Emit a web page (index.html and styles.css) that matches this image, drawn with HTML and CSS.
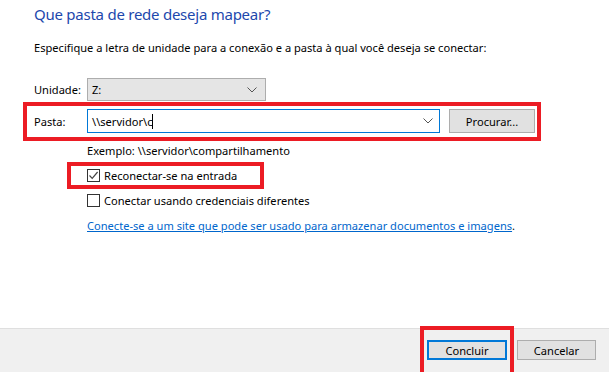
FILE: index.html
```html
<!DOCTYPE html>
<html lang="pt-BR">
<head>
    <meta charset="UTF-8">
    <meta name="viewport" content="width=device-width, initial-scale=1.0">
    <title>Mapear unidade de rede</title>
    <link rel="stylesheet" href="styles.css">
</head>
<body>
    <div class="page">
        <h1 class="title">Que pasta de rede deseja mapear?</h1>
        <p class="desc">Especifique a letra de unidade para a conexão e a pasta à qual você deseja se conectar:</p>

        <div class="row drive-row">
            <span class="label">Unidade:</span>
            <div class="combo">
                <span>Z:</span>
                <svg class="chevron" width="10" height="6" viewBox="0 0 10 6"><path d="M0.5 0.5 L5 5 L9.5 0.5" fill="none" stroke="#555" stroke-width="1"/></svg>
            </div>
        </div>

        <div class="row folder-row mark">
            <span class="label">Pasta:</span>
            <div class="path-input">
                <span class="value">\\servidor\c<span class="caret"></span></span>
                <svg class="chevron" width="10" height="6" viewBox="0 0 10 6"><path d="M0.5 0.5 L5 5 L9.5 0.5" fill="none" stroke="#555" stroke-width="1"/></svg>
            </div>
            <button class="btn browse">Procurar...</button>
        </div>

        <div class="line example">Exemplo: \\servidor\compartilhamento</div>

        <div class="line">
            <span class="check-wrap mark">
                <span class="checkbox">
                    <svg width="11" height="11" viewBox="0 0 11 11"><path d="M1.5 5.5 L4.2 8.3 L9.6 2" fill="none" stroke="#444" stroke-width="1.2"/></svg>
                </span>
                <span>Reconectar-se na entrada</span>
            </span>
        </div>

        <div class="line">
            <span class="check-wrap">
                <span class="checkbox"></span>
                <span>Conectar usando credenciais diferentes</span>
            </span>
        </div>

        <div class="line">
            <a class="link" href="#">Conecte-se a um site que pode ser usado para armazenar documentos e imagens</a>.
        </div>
    </div>

    <div class="footer">
        <span class="mark ok-wrap"><button class="btn ok">Concluir</button></span>
        <button class="btn">Cancelar</button>
    </div>
</body>
</html>
```

FILE: styles.css
```css
body {
    margin: 0;
    background-color: #fff;
    font-family: "Noto Sans", sans-serif;
    font-size: 11.1px;
    color: #000;
    overflow: hidden;
    height: 372px;
}
.page {
    height: 328px;
    padding-left: 34px;
    box-sizing: border-box;
}
.title {
    margin: 0;
    font-size: 15px;
    letter-spacing: -0.25px;
    font-weight: normal;
    line-height: 28px;
    color: #1d48ad;
}
.desc {
    margin: 11px 0 0 0;
    line-height: 18px;
}
.row {
    display: flex;
    align-items: center;
}
.label {
    width: 53px;
}
.drive-row {
    margin-top: 21px;
    height: 23px;
}
.combo {
    width: 179px;
    height: 23px;
    box-sizing: border-box;
    border: 1px solid #adadad;
    background-color: #e5e5e5;
    display: flex;
    align-items: center;
    justify-content: space-between;
    padding: 0 8px 0 4px;
}
.mark {
    outline: 4px solid #ec1c24;
}
.folder-row {
    margin: 5px 0 0 -7px;
    padding: 3px 2px 4px 7px;
    width: 510px;
    box-sizing: border-box;
}
.path-input {
    width: 353px;
    height: 24px;
    box-sizing: border-box;
    border: 1px solid #0078d7;
    display: flex;
    align-items: center;
    justify-content: space-between;
    padding: 0 6px 0 4px;
}
.caret {
    display: inline-block;
    width: 1px;
    height: 15px;
    background-color: #000;
    vertical-align: -3px;
}
.btn {
    font-family: inherit;
    font-size: inherit;
    color: #000;
    background-color: #e1e1e1;
    border: 1px solid #adadad;
    padding: 0;
    width: 79px;
    height: 20px;
}
.browse {
    margin-left: 9px;
    width: 86px;
    height: 24px;
}
.line {
    height: 25px;
    display: flex;
    align-items: center;
    padding-left: 53px;
}
.example {
    margin-top: 1px;
}
.check-wrap {
    display: flex;
    align-items: center;
    gap: 4px;
}
.check-wrap.mark {
    margin: -2px -23px -2px -16px;
    padding: 2px 23px 2px 16px;
}
.checkbox {
    width: 13px;
    height: 13px;
    box-sizing: border-box;
    border: 1px solid #333;
    display: flex;
    align-items: center;
    justify-content: center;
}
.link {
    color: #0066cc;
}
.footer {
    height: 44px;
    box-sizing: border-box;
    border-top: 1px solid #dfdfdf;
    background-color: #f0f0f0;
    display: flex;
    justify-content: flex-end;
    align-items: flex-start;
    gap: 10px;
    padding: 11px 13px 0 0;
}
.ok-wrap {
    display: flex;
    margin: -10px -3px -20px -3px;
    padding: 10px 3px 20px 3px;
}
.ok {
    width: 80px;
    border: 2px solid #0078d7;
}
```
